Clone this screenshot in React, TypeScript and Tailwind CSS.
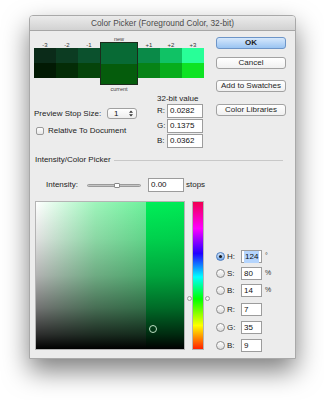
import React from 'react';

const FONT = { fontFamily: '"Liberation Sans", Arial, sans-serif' };

const top = ['#0b2b19', '#0c3c22', '#0b512d'];
const bottom = ['#021a04', '#042c07', '#05440b'];
const topR = ['#0a8a48', '#10c265', '#28ff98'];
const bottomR = ['#078317', '#07ad1c', '#0ee323'];

function Btn({ label, primary }: { label: string; primary?: boolean }) {
  return (
    <div
      className={
        'flex h-[12px] w-[70px] items-center justify-center rounded-[3px] border text-[8px] leading-none text-[#1e1e1e] ' +
        (primary
          ? 'border-[#6d95c8] bg-[linear-gradient(to_bottom,#d6e8fc,#9ac4f2)] font-bold'
          : 'border-[#a2a2a2] bg-[linear-gradient(to_bottom,#ffffff,#f0f0f0)]')
      }
    >
      {label}
    </div>
  );
}

function SideCells({ labels, tops, bottoms }: { labels: string[]; tops: string[]; bottoms: string[] }) {
  return (
    <div className="mt-[6px] flex">
      {labels.map((l, i) => (
        <div key={l} className="flex w-[22px] flex-col">
          <div className="h-[6px] text-center text-[6px] leading-[6px] text-[#333]">{l}</div>
          <div className="h-[15px]" style={{ background: tops[i] }} />
          <div className="h-[15px]" style={{ background: bottoms[i] }} />
        </div>
      ))}
    </div>
  );
}

function ValueRow({ label, value }: { label: string; value: string }) {
  return (
    <div className="flex h-[14px] items-center">
      <span className="w-[10px] text-[8px] text-[#222]">{label}</span>
      <div className="flex h-[14px] w-[36px] items-center border border-[#9c9c9c] bg-white pl-[2px] text-[8px] text-[#111]">
        {value}
      </div>
    </div>
  );
}

function Radio({ on }: { on?: boolean }) {
  return (
    <div
      className={
        'flex h-[9px] w-[9px] items-center justify-center rounded-full border ' +
        (on
          ? 'border-[#4a7cc0] bg-[linear-gradient(to_bottom,#d4e5fa,#78a8e4)]'
          : 'border-[#8c8c8c] bg-[linear-gradient(to_bottom,#ffffff,#dcdcdc)]')
      }
    >
      {on && <div className="h-[3px] w-[3px] rounded-full bg-[#1a1a1a]" />}
    </div>
  );
}

function HsbRow({ label, value, unit, on, mt }: { label: string; value: string; unit?: string; on?: boolean; mt: string }) {
  return (
    <div className={'flex h-[13px] items-center ' + mt}>
      <Radio on={on} />
      <span className="ml-[2px] w-[14px] text-[8px] text-[#222]">{label}</span>
      <div className="flex h-[13px] w-[21px] items-center border border-[#9c9c9c] bg-white pl-[2px] text-[8px] text-[#111]">
        {on ? <span className="bg-[#b5d5fd] px-[1px]">{value}</span> : value}
      </div>
      {unit && <span className="ml-[3px] text-[7px] text-[#333]">{unit}</span>}
    </div>
  );
}

export default function App() {
  return (
    <div className="h-[400px] w-[324px] bg-white pl-[29px] pt-[15px]" style={FONT}>
      <div className="flex h-[344px] w-[267px] flex-col overflow-hidden rounded-t-[4px] border border-[#a9a9a9] bg-[#ececec] shadow-[0_12px_26px_rgba(0,0,0,0.5)]">
        {/* title bar */}
        <div className="flex h-[15px] shrink-0 items-center justify-center border-b border-[#a6a6a6] bg-[linear-gradient(to_bottom,#ebebeb,#d2d2d2)] text-[8.3px] text-[#4a4a4a]">
          Color Picker (Foreground Color, 32-bit)
        </div>

        {/* top section */}
        <div className="flex pl-[4px] pt-[5px]">
          <div className="flex w-[171px] flex-col">
            {/* swatch strip */}
            <div className="flex items-start">
              <SideCells labels={['-3', '-2', '-1']} tops={top} bottoms={bottom} />
              <div className="flex w-[38px] flex-col">
                <div className="h-[6px] text-center text-[5.5px] leading-[6px] text-[#444]">new</div>
                <div className="flex h-[43px] flex-col border border-[#1b2b1b]">
                  <div className="flex-1 bg-[#086a35]" />
                  <div className="flex-1 bg-[#055c0c]" />
                </div>
                <div className="mt-[1px] h-[6px] text-center text-[5.5px] leading-[6px] text-[#444]">current</div>
              </div>
              <SideCells labels={['+1', '+2', '+3']} tops={topR} bottoms={bottomR} />
            </div>

            <div className="flex">
              <div className="flex w-[123px] flex-col">
                <div className="mt-[16px] flex h-[11px] items-center">
                  <span className="w-[73px] text-[8px] text-[#222]">Preview Stop Size:</span>
                  <div className="flex h-[11px] w-[30px] items-center justify-between rounded-[3px] border border-[#a0a0a0] bg-[linear-gradient(to_bottom,#ffffff,#eeeeee)] pl-[6px] pr-[3px] text-[8px] text-[#111]">
                    <span>1</span>
                    <svg width="4" height="7" viewBox="0 0 4 7">
                      <path d="M0 2.8 L2 0.5 L4 2.8 Z M0 4.2 L2 6.5 L4 4.2 Z" fill="#333" />
                    </svg>
                  </div>
                </div>
                <div className="mt-[6px] flex items-center pl-[2px]">
                  <div className="h-[8px] w-[8px] rounded-[2px] border border-[#9a9a9a] bg-[linear-gradient(to_bottom,#ffffff,#e6e6e6)]" />
                  <span className="ml-[4px] text-[8px] text-[#222]">Relative To Document</span>
                </div>
              </div>
              <div className="flex flex-col gap-[1px]">
                <div className="mt-[2px] h-[9px] text-[8px] leading-[9px] text-[#222]">32-bit value</div>
                <ValueRow label="R:" value="0.0282" />
                <ValueRow label="G:" value="0.1375" />
                <ValueRow label="B:" value="0.0362" />
              </div>
            </div>
          </div>

          <div className="ml-[11px] flex flex-col">
            <div className="mt-[1px]">
              <Btn label="OK" primary />
            </div>
            <div className="mt-[8px]">
              <Btn label="Cancel" />
            </div>
            <div className="mt-[11px]">
              <Btn label="Add to Swatches" />
            </div>
            <div className="mt-[12px]">
              <Btn label="Color Libraries" />
            </div>
          </div>
        </div>

        {/* section header */}
        <div className="mt-[8px] flex h-[8px] items-center pl-[5px] pr-[12px]">
          <span className="text-[8px] leading-[8px] text-[#222]">Intensity/Color Picker</span>
          <div className="ml-[3px] h-px flex-1 bg-[#c8c8c8]" />
        </div>

        {/* intensity */}
        <div className="mt-[14px] flex h-[14px] items-center pl-[16px]">
          <span className="w-[41px] text-[8px] text-[#222]">Intensity:</span>
          <div className="relative h-[3px] w-[54px] rounded-full border border-[#9a9a9a] bg-[#c4c4c4]">
            <div className="absolute left-[26px] top-[-2px] h-[5px] w-[6px] rounded-[1px] border border-[#8a8a8a] bg-white" />
          </div>
          <div className="ml-[7px] flex h-[14px] w-[36px] items-center border border-[#9c9c9c] bg-white pl-[2px] text-[8px] text-[#111]">
            0.00
          </div>
          <span className="ml-[2px] text-[8px] text-[#222]">stops</span>
        </div>

        {/* picker */}
        <div className="mt-[9px] flex pl-[5px]">
          <div className="relative h-[149px] w-[150px] border border-[#b4b4b4] bg-[image:linear-gradient(to_bottom,rgba(0,0,0,0)_0%,rgba(0,0,0,0.12)_25%,rgba(0,0,0,0.3)_50%,rgba(0,0,0,0.55)_72%,rgba(0,0,0,0.82)_90%,#000_100%),linear-gradient(to_right,#ffffff_0%,#9ef5bb_40%,#6ef19c_74%,#00ee58_74%,#00ea55_100%)]">
            <div className="absolute left-[113px] top-[123px] h-[8px] w-[8px] rounded-full border border-[#bfe0c4]" />
          </div>
          <div className="relative ml-[7px] h-[149px] w-[12px] border border-[#b4b4b4] bg-[image:linear-gradient(to_bottom,#f00050_0%,#ff00ff_18%,#2000ff_35%,#00ffff_51%,#00ff00_66%,#ffff00_84%,#ff2000_100%)]">
            <div className="absolute left-[-6px] top-[94px] h-[5px] w-[5px] rounded-full border border-[#9a9a9a] bg-[#f4f4f4]" />
            <div className="absolute right-[-7px] top-[94px] h-[5px] w-[5px] rounded-full border border-[#9a9a9a] bg-[#f4f4f4]" />
          </div>
          <div className="ml-[12px] flex flex-col pt-[49px]">
            <HsbRow label="H:" value="124" unit="°" on mt="" />
            <HsbRow label="S:" value="80" unit="%" mt="mt-[4px]" />
            <HsbRow label="B:" value="14" unit="%" mt="mt-[4px]" />
            <HsbRow label="R:" value="7" mt="mt-[6px]" />
            <HsbRow label="G:" value="35" mt="mt-[5px]" />
            <HsbRow label="B:" value="9" mt="mt-[5px]" />
          </div>
        </div>
      </div>
    </div>
  );
}
